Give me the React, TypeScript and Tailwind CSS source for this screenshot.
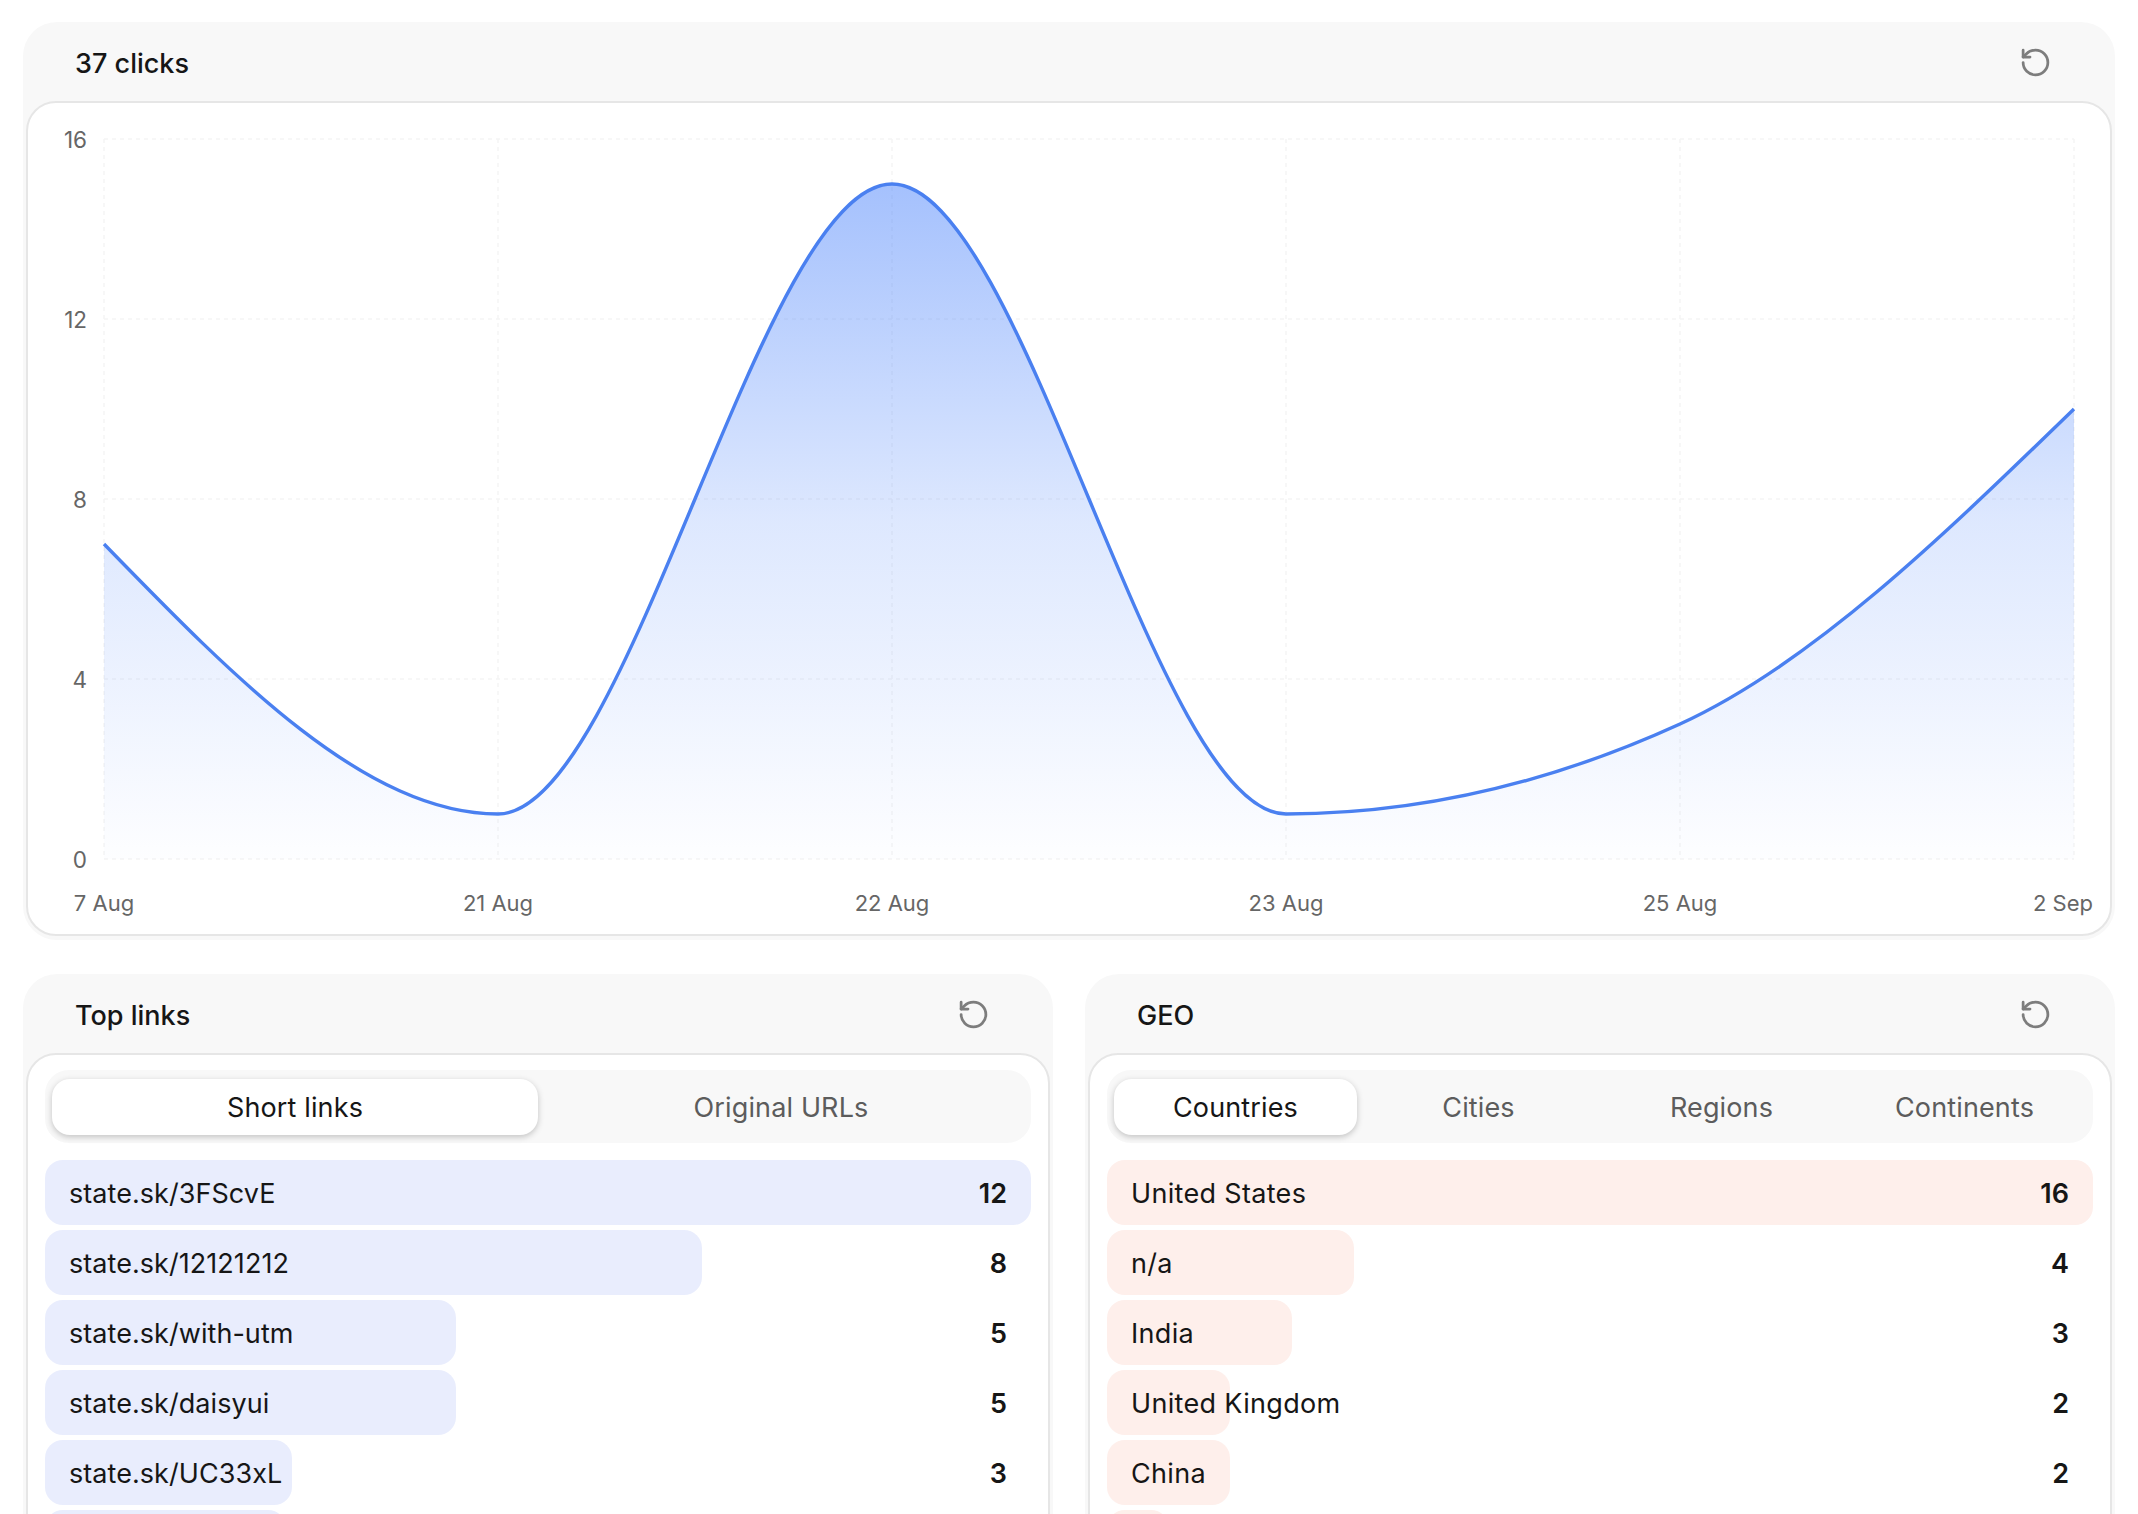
import { RotateCcw } from "lucide-react";

const font = "[font-family:Inter,'Noto_Sans',sans-serif]";

const xLabels = ["7 Aug", "21 Aug", "22 Aug", "23 Aug", "25 Aug", "2 Sep"];
const values = [7, 1, 15, 1, 3, 10];
const yTicks = [0, 4, 8, 12, 16];

// chart coordinates, relative to the white panel
const left = 76;
const step = 394;
const top = 36;
const bottom = 756;
const px = (i: number) => left + i * step;
const py = (v: number) => bottom - (v / 16) * (bottom - top);

// same maths as a monotone-x curve
function monotonePath() {
  const pts = values.map((v, i) => [px(i), py(v)]);
  const n = pts.length;
  const slopes: number[] = [];
  for (let i = 0; i < n - 1; i++) {
    slopes.push((pts[i + 1][1] - pts[i][1]) / (pts[i + 1][0] - pts[i][0]));
  }
  const t: number[] = new Array(n).fill(0);
  for (let i = 1; i < n - 1; i++) {
    const a = slopes[i - 1];
    const b = slopes[i];
    const p = (a + b) / 2;
    t[i] = (Math.sign(a) + Math.sign(b)) * Math.min(Math.abs(a), Math.abs(b), 0.5 * Math.abs(p));
  }
  t[0] = (3 * slopes[0] - t[1]) / 2;
  t[n - 1] = (3 * slopes[n - 2] - t[n - 2]) / 2;
  let d = `M${pts[0][0]},${pts[0][1]}`;
  for (let i = 0; i < n - 1; i++) {
    const h = (pts[i + 1][0] - pts[i][0]) / 3;
    d += `C${pts[i][0] + h},${pts[i][1] + h * t[i]} ${pts[i + 1][0] - h},${pts[i + 1][1] - h * t[i + 1]} ${pts[i + 1][0]},${pts[i + 1][1]}`;
  }
  return d;
}

function Card({ title, children }: { title: string; children: React.ReactNode }) {
  return (
    <div className="rounded-[34px] bg-[#f8f8f8] px-[3px] pb-[4px]">
      <div className="flex h-[79px] items-center justify-between pl-[49px] pr-[60px] pt-[2px]">
        <span className="pt-[3px] text-[27px] font-medium text-[#161616]">{title}</span>
        <RotateCcw className="h-[33px] w-[33px] text-[#7d7d7d]" strokeWidth={2} />
      </div>
      {children}
    </div>
  );
}

function Chart() {
  const line = monotonePath();
  return (
    <svg className="block h-[831px] w-full" viewBox="0 0 2082 831">
      <defs>
        <linearGradient id="area" x1="0" y1="0" x2="0" y2="1">
          <stop offset="0%" stopColor="#3b78fb" stopOpacity={0.46} />
          <stop offset="50%" stopColor="#3b78fb" stopOpacity={0.17} />
          <stop offset="100%" stopColor="#3b78fb" stopOpacity={0.01} />
        </linearGradient>
      </defs>
      {yTicks.map((v) => (
        <line key={v} x1={left} x2={px(5)} y1={py(v)} y2={py(v)} stroke="#f5f5f5" strokeWidth={1.5} strokeDasharray="4 4" />
      ))}
      {xLabels.map((_, i) => (
        <line key={i} x1={px(i)} x2={px(i)} y1={top} y2={bottom} stroke="#f5f5f5" strokeWidth={1.5} strokeDasharray="4 4" />
      ))}
      <path d={`${line}L${px(5)},${bottom}L${px(0)},${bottom}Z`} fill="url(#area)" />
      <path d={line} fill="none" stroke="#4a80f0" strokeWidth={3.4} />
      {yTicks.map((v) => (
        <text key={v} x={59} y={py(v) + 9} textAnchor="end" fill="#666666" fontSize={22.5}>
          {v}
        </text>
      ))}
      {xLabels.map((l, i) => (
        <text
          key={l}
          x={i === 5 ? 2065 : px(i)}
          y={808}
          textAnchor={i === 5 ? "end" : "middle"}
          fill="#666666"
          fontSize={22}
        >
          {l}
        </text>
      ))}
    </svg>
  );
}

function Tabs({ items }: { items: string[] }) {
  return (
    <div className="flex h-[73px] items-center rounded-[24px] bg-[#f8f8f8] px-[7px]">
      {items.map((t, i) => (
        <div
          key={t}
          className={
            i === 0
              ? "flex h-[56px] flex-1 items-center justify-center rounded-[18px] bg-white pt-[4px] text-[27px] tracking-[0.005em] text-[#161616] shadow-[0_2px_6px_rgba(0,0,0,0.22)]"
              : "flex h-[56px] flex-1 items-center justify-center pt-[4px] text-[27px] tracking-[0.005em] text-[#5c5c5c]"
          }
        >
          {t}
        </div>
      ))}
    </div>
  );
}

function Rows({
  rows,
  max,
  barClass,
  labelClass,
}: {
  rows: { label: string; value: number | null; pct?: number }[];
  max: number;
  barClass: string;
  labelClass: string;
}) {
  return (
    <div className="mt-[17px] flex flex-col gap-[5px]">
      {rows.map((r, i) => (
        <div key={i} className="relative flex h-[65px] shrink-0 items-center justify-between px-[24px]">
          <div
            className={`absolute inset-y-0 left-0 rounded-[18px] ${barClass}`}
            style={{ width: `${r.pct ?? ((r.value ?? 0) / max) * 100}%` }}
          />
          <span className={`relative pt-[4px] text-[27px] text-[#161616] ${labelClass}`}>{r.label}</span>
          <span className="relative pt-[4px] text-[27px] font-semibold text-[#161616]">{r.value}</span>
        </div>
      ))}
    </div>
  );
}

export default function App() {
  return (
    <div className={`flex h-[1514px] flex-col gap-[34px] overflow-hidden bg-white px-[23px] pt-[22px] ${font}`}>
      <Card title="37 clicks">
        <div className="rounded-[30px] border-2 border-[#e6e6e6] bg-white">
          <Chart />
        </div>
      </Card>

      <div className="grid grid-cols-2 gap-[32px]">
        <Card title="Top links">
          <div className="h-[600px] rounded-[30px] border-2 border-[#e6e6e6] bg-white px-[17px] pt-[15px]">
            <Tabs items={["Short links", "Original URLs"]} />
            <Rows
              max={12}
              barClass="bg-[#e9edfd]"
              labelClass="tracking-[0.002em]"
              rows={[
                { label: "state.sk/3FScvE", value: 12 },
                { label: "state.sk/12121212", value: 8 },
                { label: "state.sk/with-utm", value: 5 },
                { label: "state.sk/daisyui", value: 5 },
                { label: "state.sk/UC33xL", value: 3 },
                { label: "", value: null, pct: 24.4 },
              ]}
            />
          </div>
        </Card>
        <Card title="GEO">
          <div className="h-[600px] rounded-[30px] border-2 border-[#e6e6e6] bg-white px-[17px] pt-[15px]">
            <Tabs items={["Countries", "Cities", "Regions", "Continents"]} />
            <Rows
              max={16}
              barClass="bg-[#feefeb]"
              labelClass="tracking-[0.012em]"
              rows={[
                { label: "United States", value: 16 },
                { label: "n/a", value: 4 },
                { label: "India", value: 3 },
                { label: "United Kingdom", value: 2 },
                { label: "China", value: 2 },
                { label: "", value: null, pct: 6.25 },
              ]}
            />
          </div>
        </Card>
      </div>
    </div>
  );
}
